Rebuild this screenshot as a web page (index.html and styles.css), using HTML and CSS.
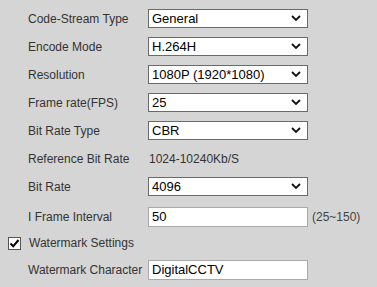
FILE: index.html
```html
<!DOCTYPE html>
<html>
<head>
<meta charset="utf-8">
<link rel="stylesheet" href="styles.css">
</head>
<body>
<div class="form">
  <div class="row">
    <span class="label">Code-Stream Type</span>
    <div class="select"><span>General</span><svg class="chev" width="10" height="7" viewBox="0 0 10 7"><polyline points="1,1 5,5 9,1" fill="none" stroke="#111" stroke-width="1.8"/></svg></div>
  </div>
  <div class="row">
    <span class="label">Encode Mode</span>
    <div class="select"><span>H.264H</span><svg class="chev" width="10" height="7" viewBox="0 0 10 7"><polyline points="1,1 5,5 9,1" fill="none" stroke="#111" stroke-width="1.8"/></svg></div>
  </div>
  <div class="row">
    <span class="label">Resolution</span>
    <div class="select"><span>1080P (1920*1080)</span><svg class="chev" width="10" height="7" viewBox="0 0 10 7"><polyline points="1,1 5,5 9,1" fill="none" stroke="#111" stroke-width="1.8"/></svg></div>
  </div>
  <div class="row">
    <span class="label">Frame rate(FPS)</span>
    <div class="select"><span>25</span><svg class="chev" width="10" height="7" viewBox="0 0 10 7"><polyline points="1,1 5,5 9,1" fill="none" stroke="#111" stroke-width="1.8"/></svg></div>
  </div>
  <div class="row">
    <span class="label">Bit Rate Type</span>
    <div class="select"><span>CBR</span><svg class="chev" width="10" height="7" viewBox="0 0 10 7"><polyline points="1,1 5,5 9,1" fill="none" stroke="#111" stroke-width="1.8"/></svg></div>
  </div>
  <div class="row">
    <span class="label">Reference Bit Rate</span>
    <span class="value">1024-10240Kb/S</span>
  </div>
  <div class="row">
    <span class="label">Bit Rate</span>
    <div class="select"><span>4096</span><svg class="chev" width="10" height="7" viewBox="0 0 10 7"><polyline points="1,1 5,5 9,1" fill="none" stroke="#111" stroke-width="1.8"/></svg></div>
  </div>
  <div class="row row-input gap-big">
    <span class="label">I Frame Interval</span>
    <div class="input">50</div>
    <span class="hint">(25~150)</span>
  </div>
  <div class="row row-check">
    <span class="check"><svg width="11" height="11" viewBox="0 0 11 11"><polyline points="1.5,5.5 4.2,8.3 9.5,2" fill="none" stroke="#000" stroke-width="2"/></svg></span>
    <span class="check-label">Watermark Settings</span>
  </div>
  <div class="row row-input">
    <span class="label">Watermark Character</span>
    <div class="input">DigitalCCTV</div>
  </div>
</div>
</body>
</html>
```

FILE: styles.css
```css
html, body {
  margin: 0;
  padding: 0;
  background: #d5d5d5;
}
body {
  width: 377px;
  height: 287px;
  overflow: hidden;
  font-family: Arial, "Liberation Sans", sans-serif;
}
.form {
  padding-top: 9px;
}
.row {
  display: flex;
  align-items: center;
  height: 19px;
  margin-bottom: 9px;
}
.label {
  width: 120px;
  padding-left: 28px;
  font-size: 12px;
  color: #333;
  white-space: nowrap;
}
.value {
  font-size: 12px;
  color: #333;
  padding-left: 1px;
}
.select {
  box-sizing: border-box;
  width: 160px;
  height: 19px;
  border: 1px solid #6a6a6a;
  background: #fff;
  display: flex;
  align-items: center;
  justify-content: space-between;
  padding: 0 6px 0 3px;
  font-size: 13px;
  color: #000;
}
.chev {
  display: block;
  margin-top: -1px;
}
.gap-big {
  margin-top: 11px;
}
.row-input {
  height: 20px;
}
.input {
  box-sizing: border-box;
  width: 160px;
  height: 20px;
  border: 1px solid #a9a9a9;
  background: #fff;
  padding: 0 3px;
  font-size: 13px;
  color: #000;
  line-height: 18px;
}
.hint {
  margin-left: 4px;
  font-size: 12px;
  color: #444;
}
.row-check {
  height: 20px;
  margin-top: -3px;
  margin-bottom: 7px;
}
.check {
  box-sizing: border-box;
  width: 13px;
  height: 13px;
  margin-left: 8px;
  border: 1px solid #555;
  background: #fff;
  display: flex;
  align-items: center;
  justify-content: center;
}
.check svg {
  display: block;
}
.check-label {
  margin-left: 8px;
  font-size: 12px;
  color: #333;
}
```
